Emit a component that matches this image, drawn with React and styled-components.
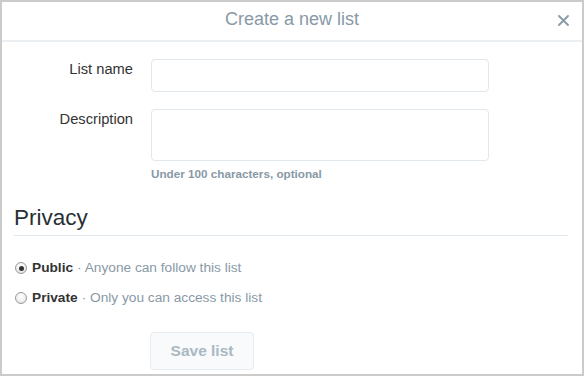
import React from "react";
import styled, { createGlobalStyle } from "styled-components";

const Global = createGlobalStyle`
  html, body { margin: 0; padding: 0; background: #fff; }
  body { font-family: "Liberation Sans", Arial, sans-serif; }
  * { box-sizing: border-box; }
`;

const Dialog = styled.div`
  width: 584px;
  height: 376px;
  border: 2px solid #cbcbcb;
  background: #fff;
  display: flex;
  flex-direction: column;
  overflow: hidden;
`;

const Header = styled.div`
  position: relative;
  height: 40px;
  border-bottom: 2px solid #eceff1;
  display: flex;
  align-items: center;
  justify-content: center;
`;

const Title = styled.h2`
  margin: 0;
  font-size: 18px;
  font-weight: normal;
  color: #8899a6;
  line-height: 20px;
  margin-top: -4px;
`;

const Close = styled.button`
  position: absolute;
  right: 11px;
  top: 10px;
  width: 16px;
  height: 16px;
  padding: 0;
  border: 0;
  background: none;
  display: flex;
  align-items: center;
  justify-content: center;
  cursor: pointer;
`;

const Body = styled.div`
  padding: 17px 14px 0 12px;
  display: flex;
  flex-direction: column;
`;

const FormGrid = styled.div`
  display: grid;
  grid-template-columns: 119px 338px;
  column-gap: 18px;
  row-gap: 17px;
`;

const Label = styled.label`
  font-size: 14.7px;
  line-height: 18px;
  color: #333;
  text-align: right;
  padding-top: 1px;
`;

const Field = styled.div`
  display: flex;
  flex-direction: column;
`;

const TextInput = styled.input`
  height: 33px;
  width: 338px;
  border: 1px solid #e1e8ed;
  border-radius: 4px;
  outline: none;
  font-family: inherit;
`;

const TextArea = styled.textarea`
  height: 52px;
  width: 338px;
  border: 1px solid #e1e8ed;
  border-radius: 4px;
  resize: none;
  outline: none;
  font-family: inherit;
`;

const Help = styled.div`
  margin-top: 6px;
  font-size: 11.7px;
  line-height: 14px;
  font-weight: bold;
  color: #8899a6;
`;

const SectionTitle = styled.h3`
  margin: 24px 0 0 0;
  padding-bottom: 4px;
  font-size: 22.5px;
  line-height: 26px;
  font-weight: normal;
  color: #292f33;
  border-bottom: 1px solid #e1e8ed;
`;

const Options = styled.div`
  margin-top: 22px;
  display: flex;
  flex-direction: column;
  gap: 10px;
`;

const Option = styled.label`
  display: flex;
  align-items: center;
  height: 20px;
  font-size: 13.7px;
  line-height: 20px;
`;

const Radio = styled.input`
  appearance: none;
  margin: 0 5px 0 1px;
  width: 12px;
  height: 12px;
  border-radius: 50%;
  border: 1px solid #9a9a9a;
  background: radial-gradient(circle at 50% 35%, #ffffff 0%, #f0f0f0 55%, #d8d8d8 100%);
  position: relative;
  &:checked::after {
    content: "";
    position: absolute;
    left: 2.5px;
    top: 2.5px;
    width: 5px;
    height: 5px;
    border-radius: 50%;
    background: #333;
  }
`;

const OptName = styled.span`
  font-weight: bold;
  color: #333;
`;

const OptDesc = styled.span`
  color: #8899a6;
  margin-left: 4px;
`;

const Actions = styled.div`
  margin-top: 24px;
  padding-left: 136px;
`;

const SaveButton = styled.button`
  width: 104px;
  height: 38px;
  border: 1px solid #e6ecf0;
  border-radius: 4px;
  background: #f8fafb;
  color: #aab8c2;
  font-family: inherit;
  font-size: 15.5px;
  font-weight: bold;
`;

export default function App() {
  return (
    <>
      <Global />
      <Dialog>
        <Header>
          <Title>Create a new list</Title>
          <Close aria-label="Close">
            <svg width="11" height="11" viewBox="0 0 11 11">
              <path d="M1 1L10 10M10 1L1 10" stroke="#8899a6" strokeWidth="1.8" strokeLinecap="round" />
            </svg>
          </Close>
        </Header>
        <Body>
          <FormGrid>
            <Label>List name</Label>
            <TextInput type="text" />
            <Label>Description</Label>
            <Field>
              <TextArea />
              <Help>Under 100 characters, optional</Help>
            </Field>
          </FormGrid>
          <SectionTitle>Privacy</SectionTitle>
          <Options>
            <Option>
              <Radio type="radio" name="privacy" defaultChecked />
              <OptName>Public</OptName>
              <OptDesc>· Anyone can follow this list</OptDesc>
            </Option>
            <Option>
              <Radio type="radio" name="privacy" />
              <OptName>Private</OptName>
              <OptDesc>· Only you can access this list</OptDesc>
            </Option>
          </Options>
          <Actions>
            <SaveButton disabled>Save list</SaveButton>
          </Actions>
        </Body>
      </Dialog>
    </>
  );
}
